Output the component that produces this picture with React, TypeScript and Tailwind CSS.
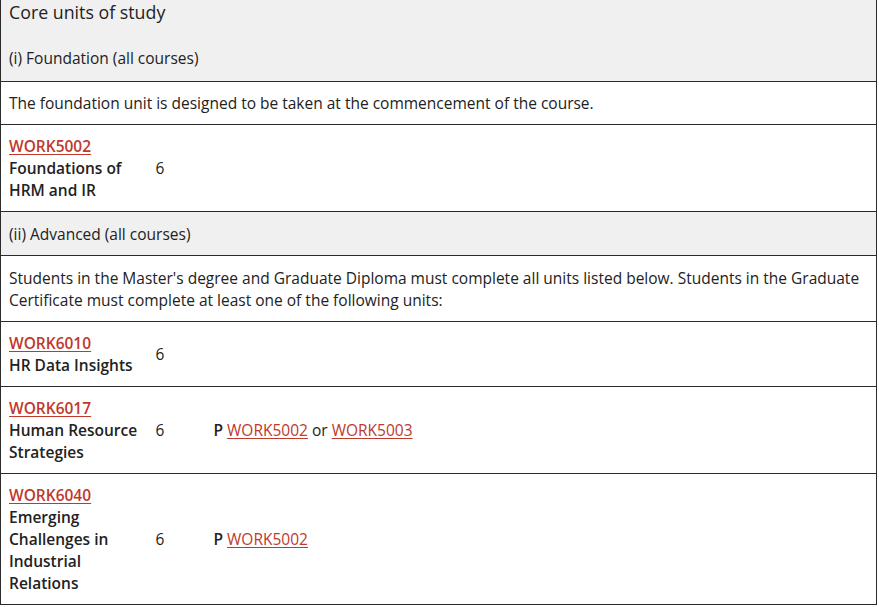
import React from "react";

type Unit = {
  code: string;
  title: string;
  credit: number;
  prereq?: string[];
};

const foundation: Unit[] = [{ code: "WORK5002", title: "Foundations of HRM and IR", credit: 6 }];

const advanced: Unit[] = [
  { code: "WORK6010", title: "HR Data Insights", credit: 6 },
  { code: "WORK6017", title: "Human Resource Strategies", credit: 6, prereq: ["WORK5002", "WORK5003"] },
  { code: "WORK6040", title: "Emerging Challenges in Industrial Relations", credit: 6, prereq: ["WORK5002"] },
];

const linkCls = "text-[#c0392b] underline underline-offset-2 decoration-1";
const cellCls = "border border-[#2b2b2b] px-2 py-[10px] align-middle";

function UnitRow({ unit }: { unit: Unit }) {
  return (
    <tr className="bg-white">
      <td className={cellCls + " border-r-0"}>
        <a href="#" className={linkCls + " font-semibold"}>
          {unit.code}
        </a>
        <div className="font-semibold">{unit.title}</div>
      </td>
      <td className={cellCls + " border-x-0"}>{unit.credit}</td>
      <td className={cellCls + " border-l-0"}>
        {unit.prereq ? (
          <span>
            <span className="font-semibold">P </span>
            {unit.prereq.map((p, i) => (
              <React.Fragment key={p}>
                {i > 0 ? " or " : null}
                <a href="#" className={linkCls}>
                  {p}
                </a>
              </React.Fragment>
            ))}
          </span>
        ) : null}
      </td>
    </tr>
  );
}

export default function App() {
  return (
    <div className="w-[879px] h-[607px] overflow-hidden bg-white text-[#222] text-[15.5px] leading-[22px]" style={{ fontFamily: '"Open Sans", sans-serif' }}>
      <table className="w-[877px] border-collapse table-fixed">
        <colgroup>
          <col className="w-[147px]" />
          <col className="w-[58px]" />
          <col />
        </colgroup>
        <tbody>
          {/* header */}
          <tr className="bg-[#f0f0f0]">
            <td colSpan={3} className="border border-[#2b2b2b] border-t-0 px-2 pt-0 pb-3">
              <div className="text-[17.8px] leading-[24px] font-medium">Core units of study</div>
              <div className="mt-[23px]">(i) Foundation (all courses)</div>
            </td>
          </tr>
          <tr className="bg-white">
            <td colSpan={3} className={cellCls}>
              The foundation unit is designed to be taken at the commencement of the course.
            </td>
          </tr>
          {foundation.map((u) => (
            <UnitRow key={u.code} unit={u} />
          ))}
          <tr className="bg-[#f0f0f0]">
            <td colSpan={3} className={cellCls + " pt-[11px] pb-[10px]"}>
              (ii) Advanced (all courses)
            </td>
          </tr>
          <tr className="bg-white">
            <td colSpan={3} className={cellCls + " pt-[11px] pb-[10px]"}>
              Students in the Master's degree and Graduate Diploma must complete all units listed below. Students in the Graduate Certificate must complete at least one of the following units:
            </td>
          </tr>
          {advanced.map((u) => (
            <UnitRow key={u.code} unit={u} />
          ))}
        </tbody>
      </table>
    </div>
  );
}
